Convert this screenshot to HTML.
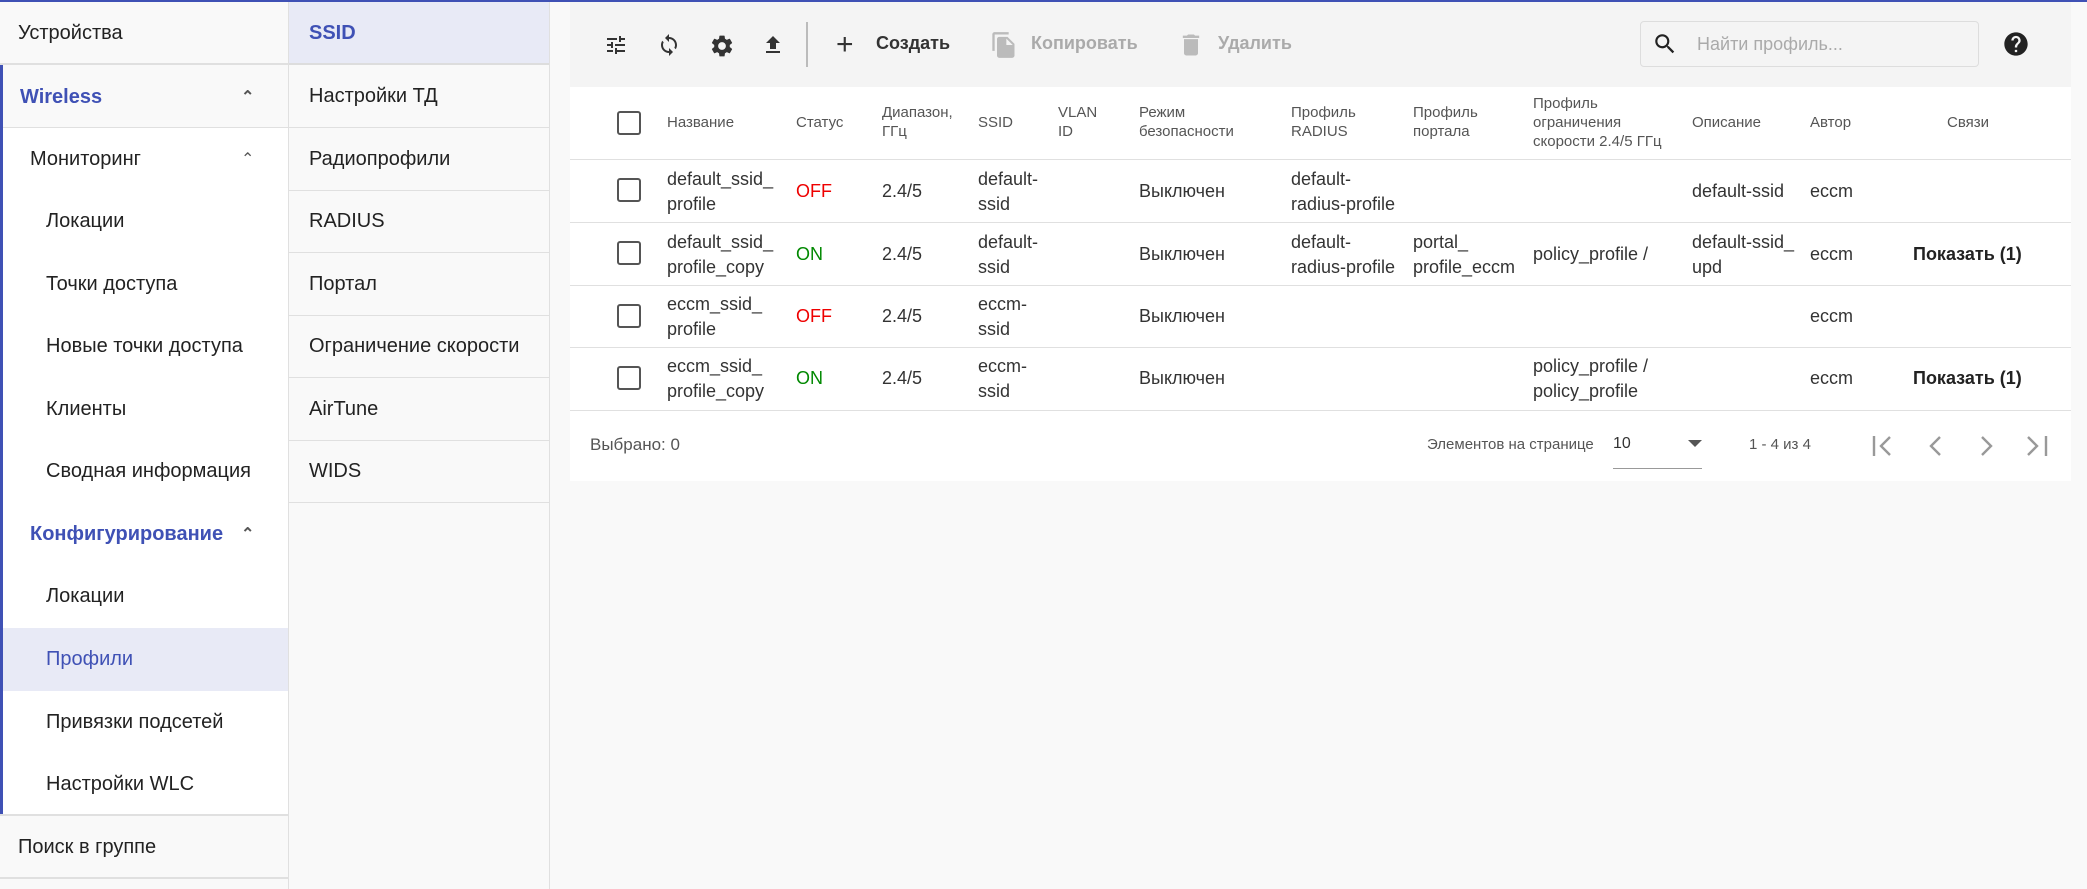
<!DOCTYPE html>
<html><head><meta charset="utf-8"><style>
*{box-sizing:border-box;margin:0;padding:0}
body{width:2087px;height:887px;overflow:hidden;background:#f9f9f9;font-family:"Liberation Sans",sans-serif;color:#222;position:relative;border-top:2px solid #3f51b5}
.a{position:absolute}
.s1{left:0;top:0;width:289px;height:887px;background:#f9f9f9;border-right:1px solid #e0e0e0}
.it{position:absolute;left:0;width:288px;height:63px;line-height:63px;font-size:20px;white-space:nowrap}
.w{background:#fff}
.s2{left:289px;top:0;width:261px;height:887px;background:#f9f9f9;border-right:1px solid #e0e0e0}
.i2{position:absolute;left:0;width:260px;height:63px;line-height:62px;font-size:20px;padding-left:20px;border-bottom:1px solid #e0e0e0}
.chev{position:absolute;left:243px;top:0;font-size:16px;color:#555}
.th{position:absolute;font-size:15px;color:#555;line-height:19px}
.td{position:absolute;font-size:18px;line-height:25px;color:#333}
.cb{position:absolute;left:617px;width:24px;height:24px;border:2px solid #555;border-radius:3px}
.hl{position:absolute;left:570px;width:1501px;height:1px;background:#e0e0e0}
</style></head><body>
<div class="a s1">
 <div class="it" style="top:0;padding-left:18px;border-bottom:2px solid #e0e0e0">Устройства</div>
 <div class="a" style="left:0;top:63px;width:3px;height:750px;background:#3f51b5"></div>
 <div class="it" style="top:64px;left:3px;width:285px;padding-left:17px;color:#3f51b5;font-weight:bold;border-bottom:2px solid #e0e0e0">Wireless<span class="chev" style="left:238px">&#8963;</span></div>
 <div class="it w" style="top:126px;left:3px;width:285px;padding-left:27px">Мониторинг<span class="chev" style="left:238px">&#8963;</span></div>
 <div class="it w" style="top:188px;left:3px;width:285px;padding-left:43px">Локации</div>
 <div class="it w" style="top:251px;left:3px;width:285px;padding-left:43px">Точки доступа</div>
 <div class="it w" style="top:313px;left:3px;width:285px;padding-left:43px">Новые точки доступа</div>
 <div class="it w" style="top:376px;left:3px;width:285px;padding-left:43px">Клиенты</div>
 <div class="it w" style="top:438px;left:3px;width:285px;padding-left:43px">Сводная информация</div>
 <div class="it w" style="top:501px;left:3px;width:285px;padding-left:27px;color:#3f51b5;font-weight:bold">Конфигурирование<span class="chev" style="left:238px">&#8963;</span></div>
 <div class="it w" style="top:563px;left:3px;width:285px;padding-left:43px">Локации</div>
 <div class="it" style="top:626px;left:3px;width:285px;padding-left:43px;background:#e8eaf6;color:#3f51b5">Профили</div>
 <div class="it w" style="top:689px;left:3px;width:285px;padding-left:43px">Привязки подсетей</div>
 <div class="it w" style="top:751px;left:3px;width:285px;padding-left:43px">Настройки WLC</div>
 <div class="it" style="top:812px;padding-left:18px;border-top:2px solid #e0e0e0;border-bottom:2px solid #e0e0e0;height:65px">Поиск в группе</div>
</div>
<div class="a s2">
 <div class="i2" style="top:0;background:#e8eaf6;color:#3f51b5;font-weight:bold;border-bottom:2px solid #ddd">SSID</div>
 <div class="i2" style="top:63px">Настройки ТД</div>
 <div class="i2" style="top:126px">Радиопрофили</div>
 <div class="i2" style="top:188px">RADIUS</div>
 <div class="i2" style="top:251px">Портал</div>
 <div class="i2" style="top:313px">Ограничение скорости</div>
 <div class="i2" style="top:376px">AirTune</div>
 <div class="i2" style="top:438px">WIDS</div>
</div>
<div class="a" style="left:570px;top:0;width:1501px;height:85px;background:#f4f4f4"></div>
<div class="a" style="left:570px;top:85px;width:1501px;height:394px;background:#fff"></div>
<!-- toolbar icons -->
<svg class="a" style="left:604px;top:31px" width="24" height="24" viewBox="0 0 24 24"><path fill="#333" d="M3 17v2h6v-2H3zM3 5v2h10V5H3zm10 16v-2h8v-2h-8v-2h-2v6h2zM7 9v2H3v2h4v2h2V9H7zm14 4v-2H11v2h10zm-6-4h2V7h4V5h-4V3h-2v6z"/></svg>
<svg class="a" style="left:657px;top:31px" width="24" height="24" viewBox="0 0 24 24"><path fill="#333" d="M12 4V1L8 5l4 4V6c3.31 0 6 2.69 6 6 0 1.01-.25 1.97-.7 2.8l1.46 1.46C19.54 15.03 20 13.57 20 12c0-4.42-3.58-8-8-8zm0 14c-3.31 0-6-2.69-6-6 0-1.01.25-1.97.7-2.8L5.24 7.74C4.46 8.97 4 10.43 4 12c0 4.42 3.58 8 8 8v3l4-4-4-4v3z"/></svg>
<svg class="a" style="left:709px;top:31px" width="26" height="26" viewBox="0 0 24 24"><path fill="#333" d="M19.14 12.94c.04-.3.06-.61.06-.94 0-.32-.02-.64-.07-.94l2.03-1.58a.49.49 0 0 0 .12-.61l-1.92-3.32a.49.49 0 0 0-.59-.22l-2.39.96c-.5-.38-1.03-.7-1.62-.94l-.36-2.54a.48.48 0 0 0-.48-.41h-3.84c-.24 0-.43.17-.47.41l-.36 2.54c-.59.24-1.13.57-1.62.94l-2.39-.96a.48.48 0 0 0-.59.22L2.74 8.87c-.12.21-.08.47.12.61l2.03 1.58c-.05.3-.09.63-.09.94s.02.64.07.94l-2.03 1.58a.49.49 0 0 0-.12.61l1.92 3.32c.12.22.37.29.59.22l2.39-.96c.5.38 1.03.7 1.62.94l.36 2.54c.05.24.24.41.48.41h3.84c.24 0 .44-.17.47-.41l.36-2.54c.59-.24 1.13-.56 1.62-.94l2.39.96c.22.08.47 0 .59-.22l1.92-3.32c.12-.22.07-.47-.12-.61l-2.01-1.58zM12 15.6A3.6 3.6 0 1 1 12 8.4a3.6 3.6 0 0 1 0 7.2z"/></svg>
<svg class="a" style="left:761px;top:31px" width="24" height="24" viewBox="0 0 24 24"><path fill="#333" d="M5 20h14v-2H5v2zm0-10h4v6h6v-6h4l-7-7-7 7z"/></svg>
<div class="a" style="left:806px;top:20px;width:2px;height:45px;background:#bbb"></div>
<div class="a" style="left:836px;top:28px;font-size:30px;line-height:30px;color:#333">+</div>
<div class="a" style="left:876px;top:31px;font-size:18px;font-weight:bold;color:#333">Создать</div>
<svg class="a" style="left:990px;top:28px" width="28" height="30" viewBox="0 0 24 24"><path fill="#bbb" d="M16 1H4c-1.1 0-2 .9-2 2v14h2V3h12V1zm-1 4l6 6v10c0 1.1-.9 2-2 2H7.99C6.89 23 6 22.1 6 21l.01-14c0-1.1.89-2 1.99-2h7zm-1 7h5.5L14 6.5V12z"/></svg>
<div class="a" style="left:1031px;top:31px;font-size:18px;font-weight:bold;color:#aaa">Копировать</div>
<svg class="a" style="left:1177px;top:28px" width="28" height="30" viewBox="0 0 24 24"><path fill="#bbb" d="M6 19c0 1.1.9 2 2 2h8c1.1 0 2-.9 2-2V7H6v12zM19 4h-3.5l-1-1h-5l-1 1H5v2h14V4z"/></svg>
<div class="a" style="left:1218px;top:31px;font-size:18px;font-weight:bold;color:#aaa">Удалить</div>
<div class="a" style="left:1640px;top:19px;width:339px;height:46px;border:1px solid #ddd;border-radius:4px;background:#f4f4f4"></div>
<svg class="a" style="left:1652px;top:29px" width="26" height="26" viewBox="0 0 24 24"><path fill="#222" d="M15.5 14h-.79l-.28-.27A6.47 6.47 0 0 0 16 9.5 6.5 6.5 0 1 0 9.5 16c1.61 0 3.09-.59 4.23-1.57l.27.28v.79l5 4.99L20.49 19l-4.99-5zm-6 0C7.01 14 5 11.99 5 9.5S7.01 5 9.5 5 14 7.01 14 9.5 11.99 14 9.5 14z"/></svg>
<div class="a" style="left:1697px;top:32px;font-size:18px;color:#aaa">Найти профиль...</div>
<svg class="a" style="left:2002px;top:28px" width="28" height="28" viewBox="0 0 24 24"><path fill="#222" d="M12 2C6.48 2 2 6.48 2 12s4.48 10 10 10 10-4.48 10-10S17.52 2 12 2zm1 17h-2v-2h2v2zm2.07-7.75l-.9.92C13.45 12.9 13 13.5 13 15h-2v-.5c0-1.1.45-2.1 1.17-2.83l1.24-1.26c.37-.36.59-.86.59-1.41 0-1.1-.9-2-2-2s-2 .9-2 2H8c0-2.21 1.79-4 4-4s4 1.79 4 4c0 .88-.36 1.68-.93 2.25z"/></svg>
<!-- header -->
<div class="cb" style="top:109px"></div>
<div class="th" style="left:667px;top:111px">Название</div>
<div class="th" style="left:796px;top:111px">Статус</div>
<div class="th" style="left:882px;top:101px">Диапазон,<br>ГГц</div>
<div class="th" style="left:978px;top:111px">SSID</div>
<div class="th" style="left:1058px;top:101px">VLAN<br>ID</div>
<div class="th" style="left:1139px;top:101px">Режим<br>безопасности</div>
<div class="th" style="left:1291px;top:101px">Профиль<br>RADIUS</div>
<div class="th" style="left:1413px;top:101px">Профиль<br>портала</div>
<div class="th" style="left:1533px;top:92px">Профиль<br>ограничения<br>скорости 2.4/5 ГГц</div>
<div class="th" style="left:1692px;top:111px">Описание</div>
<div class="th" style="left:1810px;top:111px">Автор</div>
<div class="th" style="left:1947px;top:111px">Связи</div>
<div class="hl" style="top:157px"></div>
<!-- row1 -->
<div class="cb" style="top:176px"></div>
<div class="td" style="left:667px;top:165px">default_ssid_<br>profile</div>
<div class="td" style="left:796px;top:177px;color:#e00">OFF</div>
<div class="td" style="left:882px;top:177px">2.4/5</div>
<div class="td" style="left:978px;top:165px">default-<br>ssid</div>
<div class="td" style="left:1139px;top:177px">Выключен</div>
<div class="td" style="left:1291px;top:165px">default-<br>radius-profile</div>
<div class="td" style="left:1692px;top:177px">default-ssid</div>
<div class="td" style="left:1810px;top:177px">eccm</div>
<div class="hl" style="top:220px"></div>
<!-- row2 -->
<div class="cb" style="top:239px"></div>
<div class="td" style="left:667px;top:228px">default_ssid_<br>profile_copy</div>
<div class="td" style="left:796px;top:240px;color:#080">ON</div>
<div class="td" style="left:882px;top:240px">2.4/5</div>
<div class="td" style="left:978px;top:228px">default-<br>ssid</div>
<div class="td" style="left:1139px;top:240px">Выключен</div>
<div class="td" style="left:1291px;top:228px">default-<br>radius-profile</div>
<div class="td" style="left:1413px;top:228px">portal_<br>profile_eccm</div>
<div class="td" style="left:1533px;top:240px">policy_profile /</div>
<div class="td" style="left:1692px;top:228px">default-ssid_<br>upd</div>
<div class="td" style="left:1810px;top:240px">eccm</div>
<div class="td" style="left:1913px;top:240px;font-weight:bold;color:#222">Показать (1)</div>
<div class="hl" style="top:283px"></div>
<!-- row3 -->
<div class="cb" style="top:302px"></div>
<div class="td" style="left:667px;top:290px">eccm_ssid_<br>profile</div>
<div class="td" style="left:796px;top:302px;color:#e00">OFF</div>
<div class="td" style="left:882px;top:302px">2.4/5</div>
<div class="td" style="left:978px;top:290px">eccm-<br>ssid</div>
<div class="td" style="left:1139px;top:302px">Выключен</div>
<div class="td" style="left:1810px;top:302px">eccm</div>
<div class="hl" style="top:345px"></div>
<!-- row4 -->
<div class="cb" style="top:364px"></div>
<div class="td" style="left:667px;top:352px">eccm_ssid_<br>profile_copy</div>
<div class="td" style="left:796px;top:364px;color:#080">ON</div>
<div class="td" style="left:882px;top:364px">2.4/5</div>
<div class="td" style="left:978px;top:352px">eccm-<br>ssid</div>
<div class="td" style="left:1139px;top:364px">Выключен</div>
<div class="td" style="left:1533px;top:352px">policy_profile /<br>policy_profile</div>
<div class="td" style="left:1810px;top:364px">eccm</div>
<div class="td" style="left:1913px;top:364px;font-weight:bold;color:#222">Показать (1)</div>
<div class="hl" style="top:408px"></div>
<!-- footer -->
<div class="a" style="left:590px;top:433px;font-size:17px;color:#555">Выбрано: 0</div>
<div class="a" style="left:1427px;top:434px;font-size:15px;color:#555">Элементов на странице</div>
<div class="a" style="left:1613px;top:433px;font-size:16px;color:#333">10</div>
<div class="a" style="left:1688px;top:438px;width:0;height:0;border-left:7px solid transparent;border-right:7px solid transparent;border-top:7px solid #555"></div>
<div class="a" style="left:1613px;top:466px;width:89px;height:1px;background:#999"></div>
<div class="a" style="left:1749px;top:434px;font-size:15px;color:#555">1 - 4 из 4</div>
<svg class="a" style="left:1868px;top:430px" width="200" height="28" viewBox="0 0 200 28" fill="none" stroke="#999" stroke-width="2.4"><path d="M6 4v20M22 5l-9 9 9 9"/><path d="M72 5l-9 9 9 9"/><path d="M114 5l9 9-9 9"/><path d="M160 5l9 9-9 9M178 4v20"/></svg>
</body></html>
